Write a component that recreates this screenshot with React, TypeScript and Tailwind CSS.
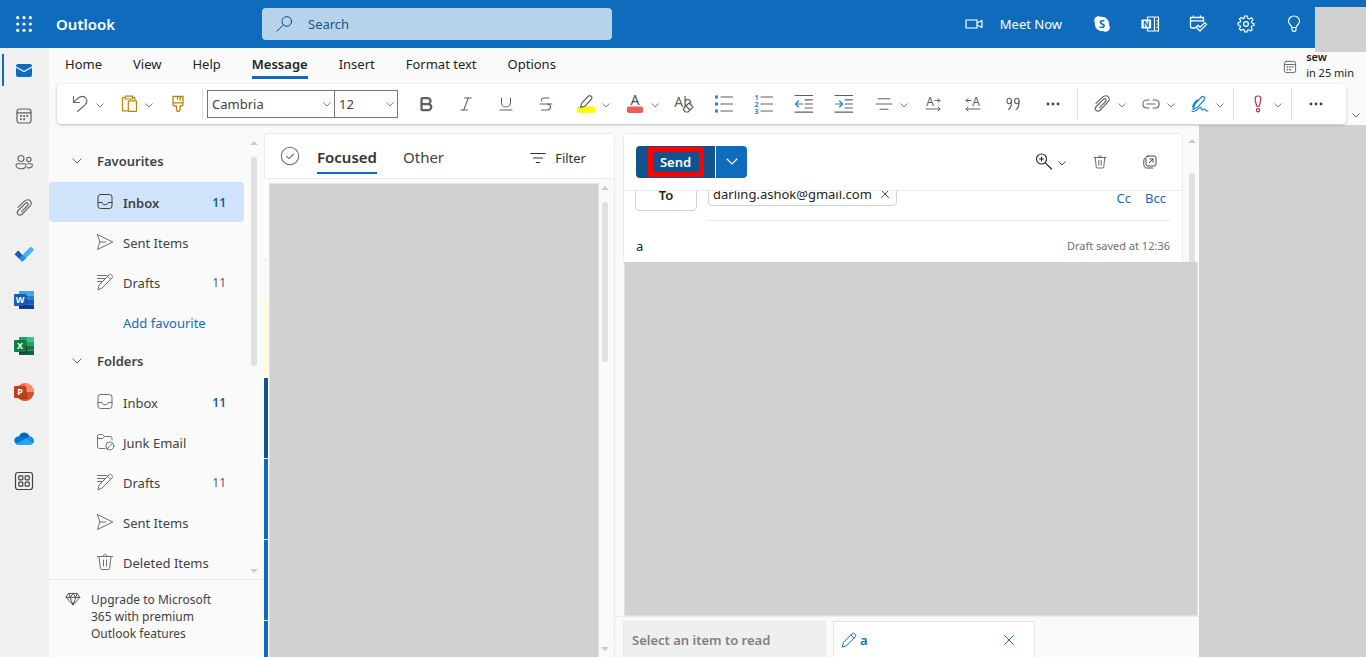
import React from "react";
import { Bold, Italic, Underline, Strikethrough, X } from "lucide-react";

type SvgProps = { children: React.ReactNode; size?: string; className?: string; sw?: number };

function Svg({ children, size = "size-5", className = "", sw = 1 }: SvgProps) {
  return (
    <svg
      viewBox="0 0 20 20"
      aria-hidden="true"
      className={`${size} shrink-0 overflow-visible ${className}`}
      fill="none"
      stroke="currentColor"
      strokeWidth={sw}
      strokeLinecap="round"
      strokeLinejoin="round"
    >
      {children}
    </svg>
  );
}

function Chevron({ className = "w-2" }: { className?: string }) {
  return (
    <svg viewBox="0 0 8 5" aria-hidden="true" className={`shrink-0 ${className}`} fill="none" stroke="currentColor" strokeWidth="0.8">
      <path d="M0.5 0.5 L4 4 L7.5 0.5" />
    </svg>
  );
}

function Arrow({ down = false }: { down?: boolean }) {
  return (
    <svg viewBox="0 0 8 4" aria-hidden="true" className="h-1 w-2 shrink-0 fill-[#c8cdd2]">
      <path d={down ? "M0 0H8L4 4Z" : "M0 4H8L4 0Z"} />
    </svg>
  );
}

function Tool({ label, children }: { label: string; children: React.ReactNode }) {
  return (
    <button aria-label={label} className="flex h-8 w-10 shrink-0 items-center justify-center">
      {children}
    </button>
  );
}

function Split({ label, children }: { label: string; children: React.ReactNode }) {
  return (
    <div className="mr-0.5 ml-[7px] flex shrink-0">
      <button aria-label={label} className="flex h-8 w-[26px] items-center justify-center">
        {children}
      </button>
      <button aria-label={`${label} options`} className="flex h-8 w-3.5 items-center justify-center pt-0.5">
        <Chevron />
      </button>
    </div>
  );
}

function Separator() {
  return <div className="mx-1 h-8 w-px shrink-0 bg-[#e0e0e0]" />;
}

function Dots() {
  return (
    <svg viewBox="0 0 14 4" aria-hidden="true" className="h-1 w-3.5 fill-[#424242]">
      <circle cx="2" cy="2" r="1.4" />
      <circle cx="7" cy="2" r="1.4" />
      <circle cx="12" cy="2" r="1.4" />
    </svg>
  );
}

function Clip({ size = "size-5" }: { size?: string }) {
  return (
    <Svg size={size} sw={1.1}>
      <path d="M4 9.4L10.2 3.4C12.4 1.3 15 1.4 16.3 2.9C17.7 4.5 17.4 6.6 15.8 8.2L8.3 16C6.9 17.4 5.1 17.5 4 16.4C2.9 15.3 3.1 13.7 4.3 12.5L11.4 5.4C12.2 4.6 13.2 4.6 13.8 5.2C14.4 5.8 14.3 6.8 13.6 7.5L7.6 13.6" />
    </Svg>
  );
}

function Calendar({ size = "size-5" }: { size?: string }) {
  return (
    <Svg size={size} sw={1.2}>
      <rect x="3" y="3" width="14" height="14" rx="2.5" />
      <path d="M3 6.8H17" />
      <g fill="currentColor" stroke="none">
        <rect x="9.2" y="9" width="1.8" height="1.8" />
        <rect x="12.4" y="9" width="1.8" height="1.8" />
        <rect x="6" y="9" width="1.8" height="1.8" />
        <rect x="6" y="12.4" width="1.8" height="1.8" />
        <rect x="9.2" y="12.4" width="1.8" height="1.8" />
      </g>
    </Svg>
  );
}

function Trash({ size = "size-5" }: { size?: string }) {
  return (
    <Svg size={size}>
      <path d="M2.5 4.5H17.5M8 4.5C8 1.5 12 1.5 12 4.5M4 4.5L5.3 16C5.4 17 6 17.5 7 17.5H13C14 17.5 14.6 17 14.7 16L16 4.5M8.5 8V14M11.5 8V14" />
    </Svg>
  );
}

const folderIcons = {
  inbox: (
    <Svg>
      <rect x="3" y="2.5" width="14" height="14" rx="2.5" />
      <path d="M3 10.5H7C7.5 13.5 12.5 13.5 13 10.5H17" />
    </Svg>
  ),
  sent: (
    <Svg>
      <path d="M2.5 2.5L17.8 10L2.5 17.5L4.8 10ZM4.8 10H11" />
    </Svg>
  ),
  drafts: (
    <Svg>
      <path d="M2.5 3.5H12M2.5 6.5H9.5M2.5 9.5H6.5M3 17.5L4.2 12.8L14 3C15.8 1.4 18.6 4 17 6L7.2 15.8ZM12.6 4.4L15.7 7.4" />
    </Svg>
  ),
  junk: (
    <Svg>
      <path d="M10 16.5H4.5A2 2 0 0 1 2.5 14.5V4A2 2 0 0 1 4.5 2.5H7.5L9.5 4.5H15A2 2 0 0 1 17 6.5V8M2.5 6.5H7.5L9.5 4.5" />
      <circle cx="14.8" cy="14" r="4" />
      <path d="M12 16.8L17.6 11.2" />
    </Svg>
  ),
  trash: <Trash />,
};

type FolderProps = { icon: keyof typeof folderIcons; name: string; count?: number; unread?: boolean; selected?: boolean };

function Folder({ icon, name, count, unread, selected }: FolderProps) {
  return (
    <a href="#" className={`mr-5 flex h-10 shrink-0 items-center rounded pr-[18px] pl-[46px] ${selected ? "bg-[#cfe4fa]" : ""}`}>
      <span className={selected ? "text-[#424242]" : "text-[#707070]"}>{folderIcons[icon]}</span>
      <span className={`ml-2 flex-1 pt-0.5 text-[#424242] ${selected ? "font-semibold" : ""}`}>{name}</span>
      {count !== undefined && (
        <span className={`pt-0.5 text-[12px] ${unread ? "font-semibold text-[#115ea3]" : "text-[#616161]"}`}>{count}</span>
      )}
    </a>
  );
}

function FolderGroup({ name }: { name: string }) {
  return (
    <button className="flex h-10 shrink-0 items-center pb-0.5 pl-[23px] font-semibold text-[#424242]">
      <span className="text-[#616161]">
        <Chevron className="w-2.5" />
      </span>
      <span className="ml-[15px]">{name}</span>
    </button>
  );
}

function OfficeTile({ letter, shape, tile }: { letter: string; shape: React.ReactNode; tile: string }) {
  return (
    <svg viewBox="0 0 20 18" aria-hidden="true" className="h-[18px] w-5">
      {shape}
      <rect x="5" y="4" width="8" height="12" fill="#000" opacity="0.25" />
      <rect x="0" y="3" width="12" height="12" rx="1" fill={tile} />
      <text x="6" y="12.4" textAnchor="middle" fontSize="9" fontWeight="700" fill="#fff" fontFamily="Noto Sans, sans-serif">
        {letter}
      </text>
    </svg>
  );
}

const railItems: { label: string; icon: React.ReactNode }[] = [
  {
    label: "Mail",
    icon: (
      <svg viewBox="0 0 16 13" aria-hidden="true" className="h-[13px] w-4">
        <rect width="16" height="13" rx="2" fill="#0f6cbd" />
        <path d="M0 3L8 7.6L16 3" fill="none" stroke="#f0f0f0" strokeWidth="1.2" />
      </svg>
    ),
  },
  { label: "Calendar", icon: <Calendar /> },
  {
    label: "People",
    icon: (
      <Svg sw={1.1}>
        <circle cx="7" cy="6.5" r="3" />
        <circle cx="14.8" cy="7.4" r="2.2" />
        <path d="M3.5 11.8H10.5C11.4 11.8 12 12.4 12 13.2C12 18 2 18 2 13.2C2 12.4 2.6 11.8 3.5 11.8ZM13.5 11.8H17.2C18 11.8 18.4 12.2 18.4 13C18.4 15.2 16 16.4 13.3 15.6" />
      </Svg>
    ),
  },
  { label: "Files", icon: <Clip /> },
  {
    label: "To Do",
    icon: (
      <svg viewBox="0 0 20 16" aria-hidden="true" className="h-4 w-5">
        <path d="M8 15.5L5 12.5L16 1.2Q16.8 0.4 17.6 1.2L19.4 3Q20.2 3.8 19.4 4.6L9 15.3Q8.5 15.9 8 15.5Z" fill="#45b3f7" />
        <path d="M0.5 8.2L3.6 5Q4.2 4.5 4.8 5L9.6 10.4L6.2 13.8Z" fill="#185abd" />
        <path d="M8 15.5L5 12.5L8.6 9L12 12.2L9 15.3Q8.5 15.9 8 15.5Z" fill="#2b8ee8" />
      </svg>
    ),
  },
  {
    label: "Word",
    icon: (
      <OfficeTile
        letter="W"
        tile="#185abd"
        shape={
          <g>
            <rect x="5" width="15" height="4.5" fill="#41a5ee" />
            <rect x="5" y="4.5" width="15" height="4.5" fill="#2b7cd3" />
            <rect x="5" y="9" width="15" height="4.5" fill="#185abd" />
            <rect x="5" y="13.5" width="15" height="4.5" fill="#103f91" />
          </g>
        }
      />
    ),
  },
  {
    label: "Excel",
    icon: (
      <OfficeTile
        letter="X"
        tile="#107c41"
        shape={
          <g>
            <rect x="5" width="8" height="9" fill="#21a366" />
            <rect x="13" width="7" height="4.5" fill="#33c481" />
            <rect x="13" y="4.5" width="7" height="4.5" fill="#21a366" />
            <rect x="5" y="9" width="8" height="9" fill="#185c37" />
            <rect x="13" y="9" width="7" height="4.5" fill="#107c41" />
            <rect x="13" y="13.5" width="7" height="4.5" fill="#185c37" />
          </g>
        }
      />
    ),
  },
  {
    label: "PowerPoint",
    icon: (
      <OfficeTile
        letter="P"
        tile="#c43e1c"
        shape={
          <g>
            <circle cx="11" cy="9" r="9" fill="#ed6c47" />
            <path d="M11 0A9 9 0 0 1 20 9H11Z" fill="#ff8f6b" />
            <path d="M20 9A9 9 0 0 1 2 9Z" fill="#d35230" />
          </g>
        }
      />
    ),
  },
  {
    label: "OneDrive",
    icon: (
      <svg viewBox="0 0 20 13" aria-hidden="true" className="h-[13px] w-5">
        <path d="M5 4.5C6.5 0 13 -1.4 15.8 4.6L11 8Z" fill="#0364b8" />
        <path d="M2 12C-1 9 0 4.6 5 4.2C7.5 4 9 5.5 11.5 7L6 12.5Z" fill="#0078d4" />
        <path d="M15.8 4.4C21 4.6 21.5 12.2 16.2 13H4.5C3.5 13 2.6 12.6 2 12L11.5 6.6Z" fill="#28a8ea" />
        <path d="M11.5 6.6C13 5 14.4 4.3 15.8 4.4C18 4.6 19.4 6 19.6 8.5V11Z" fill="#1490df" />
      </svg>
    ),
  },
];

const messageColors = ["bg-[#0f548c]", "bg-[#0f6cbd]", "bg-[#0f6cbd]", "bg-[#0f6cbd]"];
const tabs = ["Home", "View", "Help", "Message", "Insert", "Format text", "Options"];

function Header() {
  return (
    <header className="relative flex h-12 shrink-0 items-center bg-[#0f6cbd] text-white">
      <button aria-label="App launcher" className="flex h-12 w-12 items-center justify-center">
        <svg viewBox="0 0 16 16" aria-hidden="true" className="size-4 fill-white">
          {[1.7, 8, 14.3].map((y) => [1.7, 8, 14.3].map((x) => <circle key={`${x}-${y}`} cx={x} cy={y} r="1.6" />))}
        </svg>
      </button>
      <a href="#" className="ml-2 w-[206px] text-[15px] font-semibold">
        Outlook
      </a>
      <label className="flex h-8 w-[350px] items-center rounded bg-[#b7d2eb] px-3 text-[#0f4a80]">
        <Svg sw={1}>
          <circle cx="12.8" cy="7.4" r="4.8" />
          <path d="M9.3 10.9L3 17.2" />
        </Svg>
        <input
          type="search"
          aria-label="Search"
          placeholder="Search"
          className="ml-3.5 min-w-0 flex-1 bg-transparent text-[13px] outline-none placeholder:text-[#0f4a80] placeholder:opacity-90"
        />
      </label>
      <div className="flex flex-1 items-center justify-end pr-12">
        <button className="mr-4 flex items-center">
          <Svg sw={1.2}>
            <path d="M2 6H13V14H2ZM13 9L18 6.5V13.5L13 11" />
          </Svg>
          <span className="ml-4">Meet Now</span>
        </button>
        <button aria-label="Skype" className="flex h-12 w-12 items-center justify-center">
          <svg viewBox="0 0 20 20" aria-hidden="true" className="size-5">
            <circle cx="10" cy="10" r="7.2" fill="#fff" />
            <circle cx="6.5" cy="6.5" r="4.3" fill="#fff" />
            <circle cx="13.5" cy="13.5" r="4.3" fill="#fff" />
            <text x="10" y="14" textAnchor="middle" fontSize="11" fontWeight="700" fill="#0f6cbd" fontFamily="Noto Sans, sans-serif">
              S
            </text>
          </svg>
        </button>
        <button aria-label="OneNote feed" className="flex h-12 w-12 items-center justify-center">
          <Svg sw={1.2}>
            <path d="M7.5 6V3H18.5V17H7.5V14M14.5 3V17M17 6.8H18M17 10H18M17 13.2H18" />
            <rect x="2" y="6" width="8.5" height="8" fill="#fff" />
            <text x="6.2" y="13" textAnchor="middle" fontSize="8" fontWeight="700" fill="#0f6cbd" stroke="none" fontFamily="Noto Sans, sans-serif">
              N
            </text>
          </Svg>
        </button>
        <button aria-label="My Day" className="flex h-12 w-12 items-center justify-center">
          <Svg sw={1.3}>
            <path d="M7 14H4A1.5 1.5 0 0 1 2.5 12.5V3.5H15.5V7.5M2.5 6.8H15.5M5.5 2V3.5M12.5 2V3.5M8 13.2L10 11.3L12 13.3L16.8 8.6L18.6 10.4L12 17Z" />
          </Svg>
        </button>
        <button aria-label="Settings" className="flex h-12 w-12 items-center justify-center">
          <Svg sw={1.2}>
            <path d="M8.7 2H11.3L11.8 4.2L13.4 4.9L15.4 3.7L17 5.6L15.6 7.4L16 9L18 9.5V11.5L15.8 12L15.2 13.5L16.4 15.4L14.6 17L12.8 15.8L11.5 16.2L11 18H8.7L8.2 15.9L6.8 15.4L5 16.5L3.3 14.7L4.5 12.9L4 11.5L2 11V8.8L4.1 8.2L4.7 6.8L3.5 5L5.2 3.4L7 4.6L8.2 4.1Z" />
            <circle cx="10" cy="10" r="2.4" />
          </Svg>
        </button>
        <button aria-label="Tips" className="flex h-12 w-12 items-center justify-center">
          <Svg sw={1.2}>
            <path d="M8 13.5C7.8 11.6 4.5 10.4 4.5 7.2A5.5 5.2 0 0 1 15.5 7.2C15.5 10.4 12.2 11.6 12 13.5ZM8 13.5V16C8 17.8 12 17.8 12 16V13.5" />
          </Svg>
        </button>
      </div>
      <div className="absolute top-[7px] right-0 h-[45px] w-[51px] bg-[#d1d1d1]" />
    </header>
  );
}

function Ribbon() {
  return (
    <div className="mr-5 ml-2 flex h-10 items-center overflow-hidden rounded bg-white pl-[3px] text-[#616161] shadow-[0_1px_3px_rgba(0,0,0,0.25)]">
      <Split label="Undo">
        <Svg sw={1.1}>
          <path d="M3.5 2.5V8.5H9.5M3.5 8.3L8.3 4C11 1.6 14.2 2 15.8 4C17.6 6.3 17 8.8 15 10.8L7.5 17.5" />
        </Svg>
      </Split>
      <Split label="Paste">
        <Svg className="text-[#b8860b]" sw={1.2}>
          <path d="M9 16.8H3.5V3.5H6M14 3.5H15.8V6M6.2 2.2H13.5V5H6.2Z" />
          <rect x="9.3" y="6.8" width="8.2" height="10.5" rx="0.6" />
        </Svg>
      </Split>
      <Tool label="Format painter">
        <Svg className="text-[#b8860b]" sw={1.3}>
          <path d="M5 2.5H15V10.5A1.5 1.5 0 0 1 13.5 12H12V15.5C12 18 8.5 18 8.5 15.5V12H6.5A1.5 1.5 0 0 1 5 10.5ZM5 8.8H15M9.5 2.5V5M12.2 2.5V6" />
        </Svg>
      </Tool>
      <Separator />
      <div className="relative shrink-0">
        <select aria-label="Font" className="h-7 w-32 appearance-none border border-[#757575] bg-white px-1 text-[#424242]">
          <option>Cambria</option>
        </select>
        <span className="pointer-events-none absolute inset-y-0 right-1 flex items-center">
          <Chevron />
        </span>
      </div>
      <div className="relative mr-2 -ml-px shrink-0">
        <select aria-label="Font size" className="h-7 w-16 appearance-none border border-[#757575] bg-white px-1 text-[#424242]">
          <option>12</option>
        </select>
        <span className="pointer-events-none absolute inset-y-0 right-1 flex items-center">
          <Chevron />
        </span>
      </div>
      <Tool label="Bold">
        <Bold className="size-[18px]" strokeWidth={3} />
      </Tool>
      <Tool label="Italic">
        <Italic className="size-[18px]" strokeWidth={1.4} />
      </Tool>
      <Tool label="Underline">
        <Underline className="size-[18px]" strokeWidth={1.4} />
      </Tool>
      <Tool label="Strikethrough">
        <Strikethrough className="size-[18px]" strokeWidth={1.4} />
      </Tool>
      <Split label="Highlight">
        <Svg sw={1.2}>
          <rect x="1" y="12.5" width="18" height="6.5" rx="2" fill="#ffff00" stroke="none" />
          <path d="M4.5 13.5L5.8 9.2L12.5 2C14.2 0.6 17 3 15.5 5L9 12.2Z" />
        </Svg>
      </Split>
      <Split label="Font colour">
        <Svg>
          <rect x="2" y="12.5" width="16" height="6.5" rx="1.8" fill="#ee5e58" stroke="none" />
          <text x="10" y="10.8" textAnchor="middle" fontSize="14" fill="#505050" stroke="none" fontFamily="Noto Sans, sans-serif">
            A
          </text>
        </Svg>
      </Split>
      <Tool label="Clear formatting">
        <Svg>
          <text x="9" y="12.5" textAnchor="middle" fontSize="14" fill="#616161" stroke="none" fontFamily="Noto Sans, sans-serif">
            Ab
          </text>
          <path d="M9.5 14.5L15 9L19 13L14 18H11.5L9.5 16ZM12 12L16 16" fill="#fff" strokeWidth="1.2" />
        </Svg>
      </Tool>
      <Tool label="Bullets">
        <Svg>
          <path d="M7 3H18.5M7 10H18.5M7 17H18.5" strokeWidth="1.2" />
          <path d="M1 1.5H4V4.5H1ZM1 8.5H4V11.5H1ZM1 15.5H4V18.5H1Z" fill="#1f83d1" stroke="none" />
        </Svg>
      </Tool>
      <Tool label="Numbering">
        <Svg>
          <path d="M7 3H18.5M7 10H18.5M7 17H18.5" strokeWidth="1.2" />
          <g fill="#1f83d1" stroke="none" fontSize="7" fontWeight="700" fontFamily="Noto Sans, sans-serif">
            <text x="0.5" y="5.5">1</text>
            <text x="0.5" y="12.5">2</text>
            <text x="0.5" y="19.5">3</text>
          </g>
        </Svg>
      </Tool>
      <Tool label="Decrease indent">
        <Svg sw={1.2}>
          <path d="M1 1.5H18.5M11 5.8H18.5M11 10H18.5M11 14H18.5M1 18.2H18.5" />
          <path d="M8.5 10H1.5M4.5 7L1.5 10L4.5 13" stroke="#1f83d1" />
        </Svg>
      </Tool>
      <Tool label="Increase indent">
        <Svg sw={1.2}>
          <path d="M1 1.5H18.5M11 5.8H18.5M11 10H18.5M11 14H18.5M1 18.2H18.5" />
          <path d="M1.5 10H8.5M5.5 7L8.5 10L5.5 13" stroke="#1f83d1" />
        </Svg>
      </Tool>
      <Split label="Align">
        <Svg sw={1.1}>
          <path d="M4 4.8H16M2 10H18M6 15.2H14" />
        </Svg>
      </Split>
      <Tool label="Left-to-right">
        <Svg>
          <text x="7" y="11.5" textAnchor="middle" fontSize="12" fill="#616161" stroke="none" fontFamily="Noto Sans, sans-serif">
            A
          </text>
          <path d="M12 6.5H17M15 4.5L17 6.5L15 8.5M3 15H17M15 13L17 15L15 17" />
        </Svg>
      </Tool>
      <Tool label="Right-to-left">
        <Svg>
          <text x="13" y="11.5" textAnchor="middle" fontSize="12" fill="#616161" stroke="none" fontFamily="Noto Sans, sans-serif">
            A
          </text>
          <path d="M3 6.5H8M5 4.5L3 6.5L5 8.5M3 15H17M5 13L3 15L5 17" />
        </Svg>
      </Tool>
      <Tool label="Quote">
        <Svg sw={1.1}>
          <ellipse cx="6.2" cy="7" rx="2.2" ry="2.7" />
          <ellipse cx="13.8" cy="7" rx="2.2" ry="2.7" />
          <path d="M8.4 7C8.8 11 7.5 14 5.5 15.5M16 7C16.4 11 15.1 14 13.1 15.5" />
        </Svg>
      </Tool>
      <Tool label="More formatting">
        <Dots />
      </Tool>
      <Separator />
      <Split label="Attach">
        <Clip />
      </Split>
      <Split label="Link">
        <Svg sw={1.1}>
          <path d="M8 6H6C0.5 6 0.5 14 6 14H8M12 6H14C19.5 6 19.5 14 14 14H12M6 10H14" />
        </Svg>
      </Split>
      <Split label="Signature">
        <Svg className="text-[#1f83d1]" sw={1.2}>
          <path d="M3 15.5L5 10L11.5 3C13 1.5 16 3.5 14.5 5.5L8 12.8L3 15.5M8.5 6.2C6 5.5 4 9 2.5 13M2 17.5C7 18 8 14.5 10 13.5C12 12.5 10.5 16.5 12.5 15.8C14 15.2 14 14.5 14.8 15.2C15 16.5 16 17 18 17" />
        </Svg>
      </Split>
      <Separator />
      <Split label="Importance">
        <Svg className="text-[#b8323a]" sw={1.2}>
          <path d="M10 2C7.6 2 6.8 3.8 7.2 5.8L8.5 11.5C8.8 12.8 11.2 12.8 11.5 11.5L12.8 5.8C13.2 3.8 12.4 2 10 2Z" />
          <circle cx="10" cy="16.3" r="1.6" />
        </Svg>
      </Split>
      <Separator />
      <Tool label="More options">
        <Dots />
      </Tool>
    </div>
  );
}

function Navigation() {
  return (
    <nav className="flex w-[215px] shrink-0 flex-col">
      <div className="flex min-h-0 flex-1">
        <div className="flex min-w-0 flex-1 flex-col overflow-hidden pt-[17px]">
          <FolderGroup name="Favourites" />
          <Folder icon="inbox" name="Inbox" count={11} unread selected />
          <Folder icon="sent" name="Sent Items" />
          <Folder icon="drafts" name="Drafts" count={11} />
          <a href="#" className="flex h-10 shrink-0 items-center pt-0.5 pl-[74px] text-[#0f6cbd]">
            Add favourite
          </a>
          <FolderGroup name="Folders" />
          <Folder icon="inbox" name="Inbox" count={11} unread />
          <Folder icon="junk" name="Junk Email" />
          <Folder icon="drafts" name="Drafts" count={11} />
          <Folder icon="sent" name="Sent Items" />
          <Folder icon="trash" name="Deleted Items" />
        </div>
        <div className="-ml-5 flex w-5 flex-col items-center justify-between pt-4 pb-1.5">
          <Arrow />
          <div className="mt-3 mb-auto h-[209px] w-1.5 rounded-full bg-[#e0e0e0]" />
          <Arrow down />
        </div>
      </div>
      <a href="#" className="flex h-[78px] shrink-0 items-start border-t border-[#ebebeb] pt-[11px] pl-4 text-[12px] leading-[17px] text-[#424242]">
        <Svg size="size-4" sw={1.1}>
          <path d="M5 3H15L18.5 8L10 17.5L1.5 8ZM1.5 8H18.5M10 3L6.5 8L10 17.5L13.5 8L10 3M5 3L6.5 8M15 3L13.5 8" />
        </Svg>
        <span className="ml-2.5 w-36">
          Upgrade to Microsoft
          <br />
          365 with premium
          <br />
          Outlook features
        </span>
      </a>
    </nav>
  );
}

function MessageList() {
  return (
    <section className="flex w-[351px] shrink-0 flex-col pt-2">
      <div className="flex min-h-0 flex-1 flex-col rounded-t border border-b-0 border-l-0 border-[#ebebeb] bg-[#fafafa]">
        <div className="flex h-[45px] shrink-0 items-center rounded-tl border-b border-l border-[#ebebeb] bg-white pt-0.5 pr-7 pl-[15px]">
          <button aria-label="Select all" className="pb-0.5 text-[#707070]">
            <Svg sw={1.1}>
              <circle cx="10" cy="10" r="8.7" />
              <path d="M6.5 10.3L9 12.6L13.6 8" />
            </Svg>
          </button>
          <button className="mt-1 ml-[17px] border-b-2 border-[#0f6cbd] pb-[3px] text-[15px] leading-6 font-semibold text-[#323232]">Focused</button>
          <button className="mt-1 ml-[26px] border-b-2 border-transparent pb-[3px] text-[15px] leading-6 text-[#424242]">Other</button>
          <button className="mt-0.5 ml-auto flex items-center text-[#323232]">
            <Svg size="size-[18px]" sw={1.2}>
              <path d="M2 5H18M5 10H15M8 15H12" />
            </Svg>
            <span className="ml-2">Filter</span>
          </button>
        </div>
        <div className="flex min-h-0 flex-1">
          <div className="mr-px flex w-1 shrink-0 flex-col overflow-hidden">
            <div className="h-[81px] shrink-0 border-b border-[#ebebeb] bg-white" />
            <div className="h-[37px] shrink-0" />
            <div className="h-[81px] shrink-0 bg-[#fffcd5]" />
            {messageColors.map((color, i) => (
              <div key={i} className={`mb-px h-20 shrink-0 ${color}`} />
            ))}
          </div>
          <div className="mt-1 flex-1 border-x border-t border-[#e0e0e0] bg-[#d1d1d1]" />
          <div className="flex w-[15px] flex-col items-center pt-[7px] pr-1 pb-1.5">
            <Arrow />
            <div className="mt-3 mb-auto h-[160px] w-1.5 rounded-full bg-[#e0e0e0]" />
            <Arrow down />
          </div>
        </div>
      </div>
    </section>
  );
}

function Compose() {
  return (
    <section className="flex w-[584px] shrink-0 flex-col">
      <div className="ml-2 flex h-[137px] shrink-0 pt-2">
        <div className="flex flex-1 flex-col overflow-hidden rounded-t border border-b-0 border-[#ebebeb] bg-white">
          <div className="flex h-[57px] shrink-0 items-center border-b border-[#ebebeb] pr-6 pb-px pl-3">
            <button className="flex h-8 w-[79px] items-center justify-center rounded-l bg-[#0f548c] font-semibold text-white">
              <span className="flex h-[30px] w-14 items-center justify-center border-[5px] border-[#ff0000]">Send</span>
            </button>
            <button aria-label="Send options" className="ml-px flex h-8 w-[31px] items-center justify-center rounded-r bg-[#0f6cbd] text-white">
              <Chevron className="w-3" />
            </button>
            <button aria-label="Zoom" className="ml-auto flex items-center text-[#242424]">
              <Svg sw={1.1}>
                <circle cx="7.5" cy="7" r="5" />
                <path d="M11.2 10.7L17.5 17M7.5 5V9M5.5 7H9.5" />
              </Svg>
              <span className="ml-1 pt-1">
                <Chevron />
              </span>
            </button>
            <button aria-label="Discard" className="ml-[26px] text-[#424242]">
              <Trash size="size-4" />
            </button>
            <button aria-label="Open in new window" className="ml-[34px] text-[#424242]">
              <Svg size="size-4" sw={1.2}>
                <rect x="5" y="2.5" width="12.5" height="12.5" rx="2.5" />
                <path d="M3 5.5C1.8 8 2 12 2.5 14.5C3 17 4.5 17.5 7 17.5H13.5M9 11L13.5 6.5M9.8 6.2H13.8V10.2" />
              </Svg>
            </button>
          </div>
          <div className="flex h-[30px] shrink-0 items-end overflow-hidden pr-3 pl-[11px]">
            <button className="mb-2.5 flex h-8 w-[62px] shrink-0 items-center justify-center rounded border border-[#d1d1d1] font-semibold text-[#242424]">To</button>
            <div className="ml-[11px] flex h-full flex-1 items-end border-b border-[#e6e6e6] pb-3.5">
              <span className="flex h-6 items-center rounded border border-[#d1d1d1] px-1 text-[#242424]">
                darling.ashok@gmail.com
                <button aria-label="Remove recipient" className="ml-1.5">
                  <X className="size-3.5" strokeWidth={1.4} />
                </button>
              </span>
              <span className="ml-auto flex gap-3.5 pr-1 pb-0.5 leading-3 text-[#0f6cbd]">
                <button>Cc</button>
                <button>Bcc</button>
              </span>
            </div>
          </div>
          <div className="flex flex-1 items-center pr-3 pl-3">
            <input aria-label="Subject" defaultValue="a" className="min-w-0 flex-1 pt-2 text-[#242424] outline-none" />
            <span className="pt-2 text-[11px] text-[#707070]">Draft saved at 12:36</span>
          </div>
        </div>
        <div className="flex w-4 flex-col items-center pt-1.5 pl-0.5">
          <Arrow />
          <div className="mt-[30px] w-1.5 flex-1 rounded-t-full bg-[#e0e0e0]" />
        </div>
      </div>
      <div className="mr-px ml-[9px] flex-1 border border-t-0 border-[#e0e0e0] bg-[#d1d1d1]" />
      <div className="flex h-[41px] shrink-0 items-end border-t border-[#ebebeb] pl-2">
        <button className="h-9 w-[203px] border border-b-0 border-[#ebebeb] bg-[#efefef] pl-2 text-left font-semibold text-[#808080]">
          Select an item to read
        </button>
        <div className="ml-[7px] flex h-9 w-[202px] items-center border border-b-0 border-[#e6e6e6] bg-white pr-4 pl-1.5 text-[#0f6cbd]">
          <Svg size="size-[18px]" sw={1.1}>
            <path d="M2.5 17.5L4 12.5L13.5 3C15.5 1.2 18.8 4.5 17 6.5L7.5 16ZM12 4.5L15.5 8" />
          </Svg>
          <span className="ml-0.5 font-semibold">a</span>
          <button aria-label="Close draft" className="ml-auto">
            <X className="size-[18px]" strokeWidth={1.3} />
          </button>
        </div>
      </div>
    </section>
  );
}

export default function App() {
  return (
    <div className="flex h-screen flex-col overflow-hidden bg-[#fafafa] font-['Noto_Sans','Open_Sans',sans-serif] text-[13px] leading-5">
      <Header />
      <div className="flex min-h-0 flex-1">
        <aside className="flex w-[49px] shrink-0 flex-col bg-[#f0f0f0] text-[#616161]">
          {railItems.map((item, i) => (
            <a key={item.label} href="#" aria-label={item.label} className="flex h-[46px] items-center pb-0.5 pl-0.5">
              <span className={`h-8 w-0.5 ${i === 0 ? "bg-[#0f6cbd]" : ""}`} />
              <span className="ml-2.5 flex w-5 justify-center">{item.icon}</span>
            </a>
          ))}
          <a href="#" aria-label="More apps" className="flex h-[38px] w-12 items-center justify-center text-[#424242]">
            <Svg sw={1.2}>
              <rect x="1.5" y="1.5" width="17" height="17" rx="2.5" />
              <rect x="4.8" y="4.8" width="4" height="4" rx="0.8" />
              <rect x="11.2" y="4.8" width="4" height="4" rx="0.8" />
              <rect x="4.8" y="11.2" width="4" height="4" rx="0.8" />
              <rect x="11.2" y="11.2" width="4" height="4" rx="0.8" />
            </Svg>
          </a>
        </aside>
        <main className="flex min-w-0 flex-1 flex-col">
          <div className="flex h-9 shrink-0 items-start pr-3 pl-4 text-[#242424]">
            <div role="tablist" className="flex flex-1 gap-[31px] pt-1.5">
              {tabs.map((tab) => (
                <button
                  key={tab}
                  role="tab"
                  aria-selected={tab === "Message"}
                  className={tab === "Message" ? "border-b-[3px] border-[#0f6cbd] pb-0.5 font-semibold" : "border-b-[3px] border-transparent pb-0.5"}
                >
                  {tab}
                </button>
              ))}
            </div>
            <a href="#" className="flex items-center pt-px text-[11px] leading-4">
              <span className="pt-1 text-[#616161]">
                <Calendar size="size-4" />
              </span>
              <span className="ml-2">
                <span className="block font-semibold">sew</span>
                <span className="block">in 25 min</span>
              </span>
            </a>
          </div>
          <div className="relative z-10 shrink-0">
            <Ribbon />
            <button aria-label="Collapse ribbon" className="absolute right-1.5 bottom-1.5 text-[#424242]">
              <Chevron />
            </button>
          </div>
          <div className="flex min-h-0 flex-1 pt-px">
            <Navigation />
            <MessageList />
            <Compose />
            <div className="flex-1 bg-[#d1d1d1]" />
          </div>
        </main>
      </div>
    </div>
  );
}
